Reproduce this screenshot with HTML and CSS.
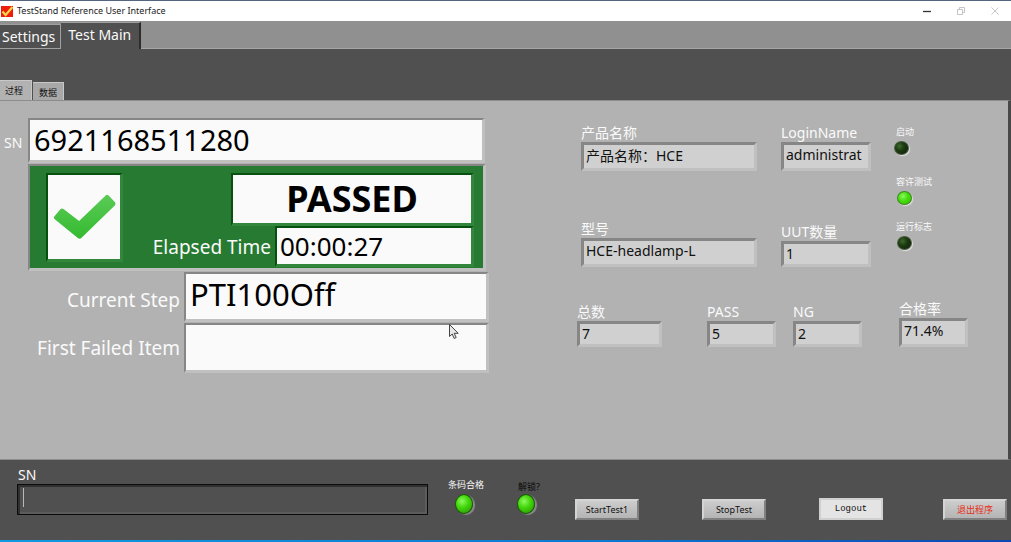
FILE: index.html
```html
<!DOCTYPE html>
<html lang="zh-CN">
<head>
<meta charset="utf-8">
<title>TestStand Reference User Interface</title>
<link rel="stylesheet" href="styles.css">
</head>
<body>
<header class="titlebar">
  <svg class="app-icon" viewBox="0 0 13 11" aria-hidden="true"><rect width="12" height="11" fill="#ee1c0c"/><path d="M1.500 5.500 4.600 9 11.500 1" fill="none" stroke="#f5d74a" stroke-width="2.200"/></svg>
  <h1 class="title">TestStand Reference User Interface</h1>
  <div class="window-buttons">
    <button class="window-button" aria-label="Minimize"><svg viewBox="0 0 10 10"><path d="M1 5.5h8" stroke="#333" stroke-width="1.3"/></svg></button>
    <button class="window-button" aria-label="Restore"><svg viewBox="0 0 10 10" fill="none" stroke="#c4c4c4"><path d="M1.5 3.5h5v5h-5zM3.5 3V1.5h5v5H7"/></svg></button>
    <button class="window-button" aria-label="Close"><svg viewBox="0 0 10 10"><path d="M1.5 1.5l7 7M8.500 1.500l-7 7" stroke="#c8c8c8"/></svg></button>
  </div>
</header>
<nav class="tabs">
  <button class="tab">Settings</button>
  <button class="tab tab-active">Test Main</button>
</nav>
<nav class="subtabs">
  <button class="subtab subtab-active">过程</button>
  <button class="subtab">数据</button>
</nav>
<main class="panel">
  <section class="run">
    <div class="run-row sn-row">
      <label class="sn-label" for="sn">SN</label>
      <input class="well display sn-display" id="sn" readonly value="6921168511280">
    </div>
    <div class="well status">
      <div class="well sunk mark">
        <svg viewBox="0 0 64 46" aria-hidden="true"><defs><linearGradient id="tick" x1="0" y1="0" x2="0" y2="1"><stop offset="0" stop-color="#5acb56"/><stop offset="1" stop-color="#35ba30"/></linearGradient></defs><path d="M1.500 22.500 7.500 15.500Q9 14 11 15.500L26.500 27.500 53.500 1.500Q55 0 56.500 1.500L63 8.500Q64 10 63 11.500L28.500 45Q27 46 25.500 45L1.500 25.500Q0 24 1.500 22.500Z" fill="url(#tick)"/></svg>
      </div>
      <output class="well sunk result">PASSED</output>
      <label class="big-label elapsed-label" for="elapsed">Elapsed Time</label>
      <input class="well sunk elapsed" id="elapsed" readonly value="00:00:27">
    </div>
    <div class="run-row step-row">
      <label class="big-label" for="step">Current Step</label>
      <input class="well display step-display" id="step" readonly value="PTI100Off">
    </div>
    <div class="run-row step-row failed-row">
      <label class="big-label" for="failed">First Failed Item</label>
      <input class="well display step-display" id="failed" readonly>
      <svg class="pointer" viewBox="0 0 10 16" aria-hidden="true"><path d="M.5.5v12l2.700-2.500 2 4.500 2-1-2-4.200h4z" fill="#e8e8e8" stroke="#444"/></svg>
    </div>
  </section>
  <section class="info">
    <div class="details">
      <div class="stack">
        <div class="field"><label for="product">产品名称</label><input class="well value tall" id="product" readonly value="产品名称：HCE"></div>
        <div class="field"><label for="model">型号</label><input class="well value tall" id="model" readonly value="HCE-headlamp-L"></div>
      </div>
      <div class="stack">
        <div class="field"><label for="login">LoginName</label><input class="well value tall" id="login" readonly value="administrat"></div>
        <div class="field"><label for="uut">UUT数量</label><input class="well value" id="uut" readonly value="1"></div>
      </div>
      <div class="lamps">
        <div class="lamp start-lamp"><span>启动</span><i class="led"></i></div>
        <div class="lamp"><span>容许测试</span><i class="led led-on"></i></div>
        <div class="lamp"><span>运行标志</span><i class="led"></i></div>
      </div>
    </div>
    <div class="counts">
      <div class="field"><label for="total">总数</label><input class="well value" id="total" readonly value="7"></div>
      <div class="field"><label for="pass">PASS</label><input class="well value" id="pass" readonly value="5"></div>
      <div class="field"><label for="ng">NG</label><input class="well value" id="ng" readonly value="2"></div>
      <div class="field"><label for="rate">合格率</label><input class="well value tall" id="rate" readonly value="71.4%"></div>
    </div>
  </section>
</main>
<footer class="controls">
  <div class="scan"><label for="scan">SN</label><input class="scan-input" id="scan"></div>
  <div class="lamp footer-lamp code-lamp"><span>条码合格</span><i class="led led-big led-on"></i></div>
  <div class="lamp footer-lamp lock-lamp"><span>解锁?</span><i class="led led-big led-on"></i></div>
  <button class="action start">StartTest1</button>
  <button class="action stop">StopTest</button>
  <button class="action logout">Logout</button>
  <button class="action exit">退出程序</button>
</footer>
</body>
</html>
```
FILE: styles.css
```css
* {
  box-sizing: border-box;
}

body {
  margin: 0;
  min-height: 100vh;
  display: flex;
  flex-direction: column;
  border-top: 1px solid #54657f;
  background: #505050;
  color: #fafafa;
  font: 14px/19px "Noto Sans", "Noto Sans CJK SC", sans-serif;
}

button,
input {
  margin: 0;
  font: inherit;
  color: inherit;
  border-radius: 0;
  min-width: 0;
  outline: none;
}

button {
  padding: 0;
  white-space: nowrap;
}

/* Title bar */
.titlebar {
  display: flex;
  align-items: center;
  height: 20px;
  padding-left: 1px;
  background: #fff;
  color: #222;
}

.app-icon {
  width: 13px;
  height: 11px;
}

.title {
  flex: 1;
  margin: 0 0 0 3px;
  padding-bottom: 2px;
  font-size: 9px;
  font-weight: 400;
}

.window-buttons {
  display: flex;
  gap: 14px;
  padding-right: 6px;
}

.window-button {
  display: flex;
  align-items: center;
  justify-content: center;
  width: 20px;
  height: 20px;
  border: 0;
  background: none;
}

.window-button svg {
  width: 10px;
  height: 10px;
}

/* Tabs */
.tabs {
  display: flex;
  align-items: flex-end;
  height: 28px;
  background: #909090;
  box-shadow: inset 0 -1px #a6a6a6;
}

.tab {
  height: 25px;
  padding: 0 5px 0 2px;
  border: 1px solid #a0a0a0;
  border-left: 0;
  background: #505050;
}

.tab-active {
  height: 27px;
  padding: 0 8px 3px 7px;
  border-right: 2px solid #2c2c2c;
  border-bottom: 0;
}

.subtabs {
  display: flex;
  align-items: flex-end;
  height: 51px;
  color: #111;
  font-size: 9px;
}

.subtab {
  height: 18px;
  padding: 0 6px;
  border: 1px solid #c8c8c8;
  border-width: 1px 1px 0 0;
  background: #a8a8a8;
}

.subtab-active {
  height: 20px;
  padding: 0 8px 1px 5px;
  margin-right: 1px;
  background: #b2b2b2;
}

/* Main panel */
.panel {
  flex: 1;
  display: grid;
  grid-template-columns: minmax(0, 489fr) minmax(0, 519fr);
  border-top: 1px solid #8c8c8c;
  border-right: 3px solid #484848;
  border-bottom: 1px solid #8c8c8c;
  background: #b2b2b2;
}

.well {
  border: solid;
  border-width: 2px 3px 3px 2px;
  border-color: #868686 #c0c0c0 #c0c0c0 #868686;
}

.sunk {
  border-color: #075010 #32873d #32873d #075010;
  background: #fafafa;
  color: #000;
}

.run {
  padding-top: 17px;
}

.run-row {
  display: flex;
  align-items: center;
}

.sn-row {
  padding-right: 4px;
}

.sn-label {
  width: 28px;
  padding: 4px 0 0 4px;
}

.display {
  flex: 1;
  padding: 0 4px;
  background: #fafafa;
  color: #000;
}

.sn-display {
  height: 45px;
  padding-bottom: 2px;
  font-size: 29px;
}

.status {
  display: grid;
  grid-template-columns: minmax(0, 77fr) minmax(0, 108fr) minmax(0, 44fr) minmax(0, 199fr);
  grid-template-rows: 53px 41px;
  margin: 1px 3px 0 28px;
  padding: 7px 9px 1px 16px;
  background: #277a32;
}

.mark {
  grid-column: 1;
  grid-row: 1 / 3;
  display: flex;
  align-items: center;
  height: 89px;
  padding: 0 4px 0 5px;
}

.mark svg {
  width: 100%;
}

.result {
  grid-column: 3 / 5;
  grid-row: 1;
  display: flex;
  align-items: center;
  justify-content: center;
  font-size: 36px;
  font-weight: 700;
  line-height: 40px;
}

.big-label {
  font-size: 19px;
  line-height: 26px;
  text-align: right;
  white-space: nowrap;
}

.elapsed-label {
  grid-column: 2 / 4;
  grid-row: 2;
  align-self: center;
  padding-right: 4px;
}

.elapsed {
  grid-column: 4;
  grid-row: 2;
  padding: 0 3px;
  font-size: 26px;
}

.step-row {
  position: relative;
  margin-top: 1px;
}

.step-row .big-label {
  width: 184px;
  padding: 6px 4px 0 0;
}

.failed-row .big-label {
  padding-top: 0;
}

.step-display {
  height: 50px;
  padding-bottom: 5px;
  font-size: 31px;
}

.pointer {
  position: absolute;
  left: 449px;
  top: 1px;
  width: 10px;
  height: 16px;
}

/* Product information and counters */
.info {
  padding-top: 22px;
}

.details {
  display: grid;
  grid-template-columns: minmax(0, 176fr) minmax(0, 90fr) minmax(0, 113fr);
  gap: 24px;
  padding-left: 92px;
}

.stack {
  display: flex;
  flex-direction: column;
  gap: 48px;
}

.stack:nth-child(2) {
  gap: 51px;
}

.field {
  display: flex;
  flex-direction: column;
  white-space: nowrap;
}

.value {
  width: 100%;
  height: 26px;
  padding: 0 2px 2px;
  border-width: 3px;
  background: #d0d0d0;
  color: #111;
}

.tall {
  height: 29px;
  padding-bottom: 4px;
}

.counts {
  display: grid;
  grid-template-columns:
    minmax(0, 85fr) minmax(0, 45fr) minmax(0, 69fr) minmax(0, 17fr)
    minmax(0, 69fr) minmax(0, 37fr) minmax(0, 69fr) minmax(0, 40fr);
  align-items: end;
  padding: 32px 0 0 88px;
}

.counts .field:nth-child(2) {
  grid-column: 3;
}

.counts .field:nth-child(3) {
  grid-column: 5;
}

.counts .field:nth-child(4) {
  grid-column: 7;
}

/* Indicator lamps */
.lamps {
  display: flex;
  flex-direction: column;
  gap: 15px;
  padding: 2px 0 0 1px;
}

.start-lamp {
  margin-bottom: 5px;
}

.lamp {
  display: flex;
  flex-direction: column;
  gap: 2px;
  font-size: 9px;
  line-height: 14px;
  white-space: nowrap;
}

.led {
  width: 15px;
  height: 14px;
  margin-left: 1px;
  border: 1px solid #4a5a40;
  border-radius: 50%;
  background: radial-gradient(circle at 35% 35%, #3f6a2c, #1c3b10 40%, #0c1c06);
  box-shadow: 1px 1px 1px #e4e4e4;
}

.start-lamp .led {
  margin-left: -2px;
}

.led-on {
  border-color: #3c8a1c;
  background: radial-gradient(circle at 38% 35%, #8cf860, #44dc0c 45%, #35c000);
}

.led-big {
  width: 18px;
  height: 20px;
  border-color: #1c5c08;
  background: radial-gradient(circle at 38% 35%, #8cf860, #44d80c 40%, #249000);
  box-shadow: 2px 1px 1px #8c8c8c;
}

/* Footer */
.controls {
  display: grid;
  grid-template-columns: 17fr 411fr 20fr 36fr 34fr 24fr 33fr 64fr 63fr 64fr 53fr 64fr 60fr 64fr 4fr;
  align-items: end;
  height: 82px;
  padding-bottom: 20px;
  border-bottom: 2px solid;
  border-image: linear-gradient(90deg, #109ae0, #0c78d0 60%, #0c48b0) 1;
}

.scan {
  grid-column: 2;
  display: flex;
  flex-direction: column;
  padding-bottom: 5px;
}

.scan label {
  padding-left: 1px;
}

.scan-input {
  width: 100%;
  height: 31px;
  padding: 0 4px;
  border: 1px solid #0c0c0c;
  background: linear-gradient(#b8b8b8, #b8b8b8) 5px 3px / 1px 19px no-repeat #505050;
  box-shadow: inset 2px 2px #303030, inset -2px -2px #5c5c5c;
}

.footer-lamp {
  padding-bottom: 6px;
}

.code-lamp {
  grid-column: 4;
}

.code-lamp .led {
  margin-left: 7px;
}

.lock-lamp {
  grid-column: 6;
  color: #080808;
  gap: 0;
}

.lock-lamp .led {
  margin-left: -1px;
}

.action {
  height: 21px;
  border: 2px outset #d4d4d4;
  background: linear-gradient(#cdcdcd, #b4b4b4);
  color: #111;
  font-size: 9px;
  line-height: 16px;
}

.start {
  grid-column: 8;
}

.stop {
  grid-column: 10;
}

.logout {
  grid-column: 12;
  height: 22px;
  border: 2px solid #d0d0d0;
  background: #e4e4e4;
  font-family: "Liberation Mono", monospace;
}

.exit {
  grid-column: 14;
  color: #e82c14;
}
```
